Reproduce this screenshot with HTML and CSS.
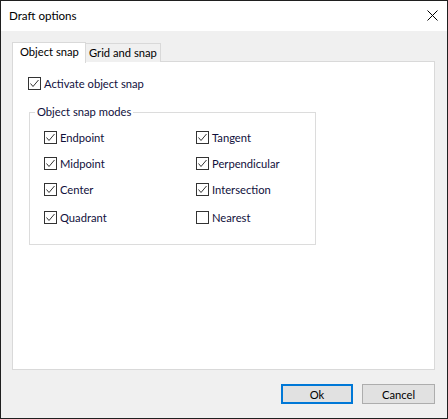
FILE: index.html
```html
<!DOCTYPE html>
<html>
<head>
<meta charset="utf-8">
<link rel="stylesheet" href="styles.css">
</head>
<body>
<div class="window">
  <div class="titlebar">
    <span class="title">Draft options</span>
    <svg class="close" width="11" height="11" viewBox="0 0 11 11"><path d="M0.5 0.5 L10.5 10.5 M10.5 0.5 L0.5 10.5" stroke="#000" stroke-width="1" fill="none"/></svg>
  </div>
  <div class="content">
    <div class="tabs">
      <div class="tab active">Object snap</div>
      <div class="tab">Grid and snap</div>
    </div>
    <div class="panel">
      <label class="check top-check"><span class="box checked"><svg width="11" height="11" viewBox="0 0 11 11"><path d="M1.5 5.5 L4 8.5 L9.5 2" stroke="#333" stroke-width="1" fill="none"/></svg></span><span class="lbl">Activate object snap</span></label>
      <fieldset class="group">
        <legend>Object snap modes</legend>
        <div class="grid">
          <label class="check"><span class="box checked"><svg width="11" height="11" viewBox="0 0 11 11"><path d="M1.5 5.5 L4 8.5 L9.5 2" stroke="#333" stroke-width="1" fill="none"/></svg></span><span class="lbl">Endpoint</span></label>
          <label class="check"><span class="box checked"><svg width="11" height="11" viewBox="0 0 11 11"><path d="M1.5 5.5 L4 8.5 L9.5 2" stroke="#333" stroke-width="1" fill="none"/></svg></span><span class="lbl">Tangent</span></label>
          <label class="check"><span class="box checked"><svg width="11" height="11" viewBox="0 0 11 11"><path d="M1.5 5.5 L4 8.5 L9.5 2" stroke="#333" stroke-width="1" fill="none"/></svg></span><span class="lbl">Midpoint</span></label>
          <label class="check"><span class="box checked"><svg width="11" height="11" viewBox="0 0 11 11"><path d="M1.5 5.5 L4 8.5 L9.5 2" stroke="#333" stroke-width="1" fill="none"/></svg></span><span class="lbl">Perpendicular</span></label>
          <label class="check"><span class="box checked"><svg width="11" height="11" viewBox="0 0 11 11"><path d="M1.5 5.5 L4 8.5 L9.5 2" stroke="#333" stroke-width="1" fill="none"/></svg></span><span class="lbl">Center</span></label>
          <label class="check"><span class="box checked"><svg width="11" height="11" viewBox="0 0 11 11"><path d="M1.5 5.5 L4 8.5 L9.5 2" stroke="#333" stroke-width="1" fill="none"/></svg></span><span class="lbl">Intersection</span></label>
          <label class="check"><span class="box checked"><svg width="11" height="11" viewBox="0 0 11 11"><path d="M1.5 5.5 L4 8.5 L9.5 2" stroke="#333" stroke-width="1" fill="none"/></svg></span><span class="lbl">Quadrant</span></label>
          <label class="check"><span class="box"></span><span class="lbl">Nearest</span></label>
        </div>
      </fieldset>
    </div>
    <div class="buttons">
      <button class="btn default">Ok</button>
      <button class="btn">Cancel</button>
    </div>
  </div>
</div>
</body>
</html>
```
FILE: styles.css
```css
html, body {
  margin: 0;
  padding: 0;
}
body {
  font-family: Lato, "Liberation Sans", sans-serif;
  font-size: 11.2px;
  color: #000;
}
.window {
  width: 448px;
  height: 419px;
  box-sizing: border-box;
  border: 1px solid #1f1f1f;
  background: #f0f0f0;
  display: flex;
  flex-direction: column;
}
.titlebar {
  height: 30px;
  background: #fff;
  display: flex;
  align-items: center;
  justify-content: space-between;
  padding: 0 9px 0 8px;
}
.title {
  line-height: 30px;
  font-size: 11.6px;
  color: #000;
}
.close {
  display: block;
  margin-top: -1px;
}
.content {
  flex: 1;
  display: flex;
  flex-direction: column;
  padding: 11px 12px 0 11px;
}
.tabs {
  display: flex;
  align-items: flex-end;
  height: 20px;
  margin-bottom: -1px;
  position: relative;
  z-index: 1;
}
.tab {
  box-sizing: border-box;
  height: 19px;
  width: 76px;
  border: 1px solid #d9d9d9;
  border-bottom: none;
  border-left: none;
  background: #f0f0f0;
  padding-left: 4px;
  line-height: 18px;
  white-space: nowrap;
}
.tab.active {
  height: 21px;
  width: 74px;
  background: #fff;
  border-left: 1px solid #d9d9d9;
  border-right: 1px solid #d9d9d9;
  padding-left: 7px;
  line-height: 18px;
  margin-bottom: -1px;
  margin-right: -1px;
  position: relative;
  z-index: 2;
}
.panel {
  box-sizing: border-box;
  height: 309px;
  background: #fff;
  border: 1px solid #d9d9d9;
  padding: 15px 0 0 15px;
}
.check {
  display: flex;
  align-items: center;
  height: 13px;
  color: #10103c;
  white-space: nowrap;
}
.box {
  box-sizing: border-box;
  width: 13px;
  height: 13px;
  border: 1px solid #333;
  background: #fff;
  display: block;
  flex: none;
}
.box svg {
  display: block;
}
.lbl {
  margin-left: 3px;
  line-height: 13px;
}
.group {
  margin: 15px 0 0 1px;
  padding: 0 0 20px 14px;
  border: 1px solid #dcdcdc;
  width: 287px;
  box-sizing: border-box;
  min-width: 0;
}
.group legend {
  padding: 0 2px;
  margin-left: -9px;
  line-height: 14px;
  color: #10103c;
}
.grid {
  display: grid;
  grid-template-columns: 152px auto;
  grid-template-rows: 26px 26px 28px 13px;
  align-items: start;
  padding-top: 12px;
}
.buttons {
  display: flex;
  justify-content: flex-end;
  gap: 9px;
  margin-top: 14px;
}
.btn {
  box-sizing: border-box;
  height: 20px;
  width: 73px;
  background: #e1e1e1;
  border: 1px solid #adadad;
  font-family: Lato, "Liberation Sans", sans-serif;
  font-size: 11.2px;
  color: #000;
  padding: 0;
  margin: 0;
}
.btn.default {
  width: 72px;
  border: 2px solid #0078d7;
}
```
